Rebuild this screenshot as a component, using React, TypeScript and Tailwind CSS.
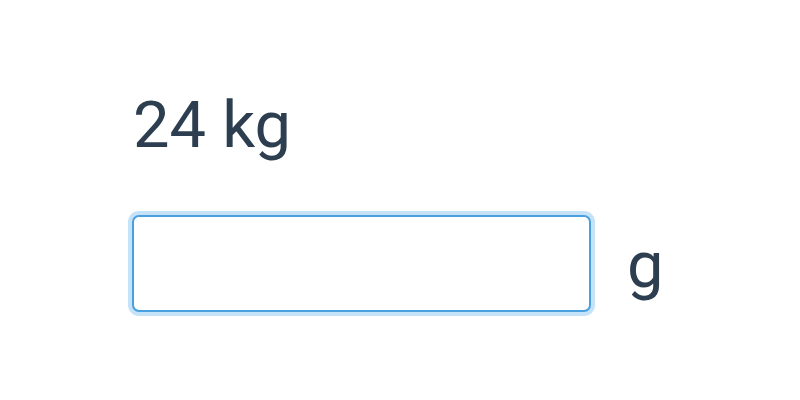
import React from "react";

export default function App() {
    return (
        <div className="w-[800px] h-[400px] bg-white pt-[87px] pl-[132px] font-['Roboto',sans-serif] text-[#2c3e50]">
            {/* value */}
            <div className="text-[65px] leading-[76px] ml-[1px]">24 kg</div>

            {/* input row */}
            <div className="flex items-center mt-[52px]">
                <input
                    type="text"
                    className="w-[459px] h-[97px] border-2 border-[#4aa0df] rounded-[7px] ring-4 ring-[#c4e2f8] outline-none bg-white"
                />
                <span className="text-[65px] leading-[76px] ml-[36px] mt-[2px]">g</span>
            </div>
        </div>
    );
}
